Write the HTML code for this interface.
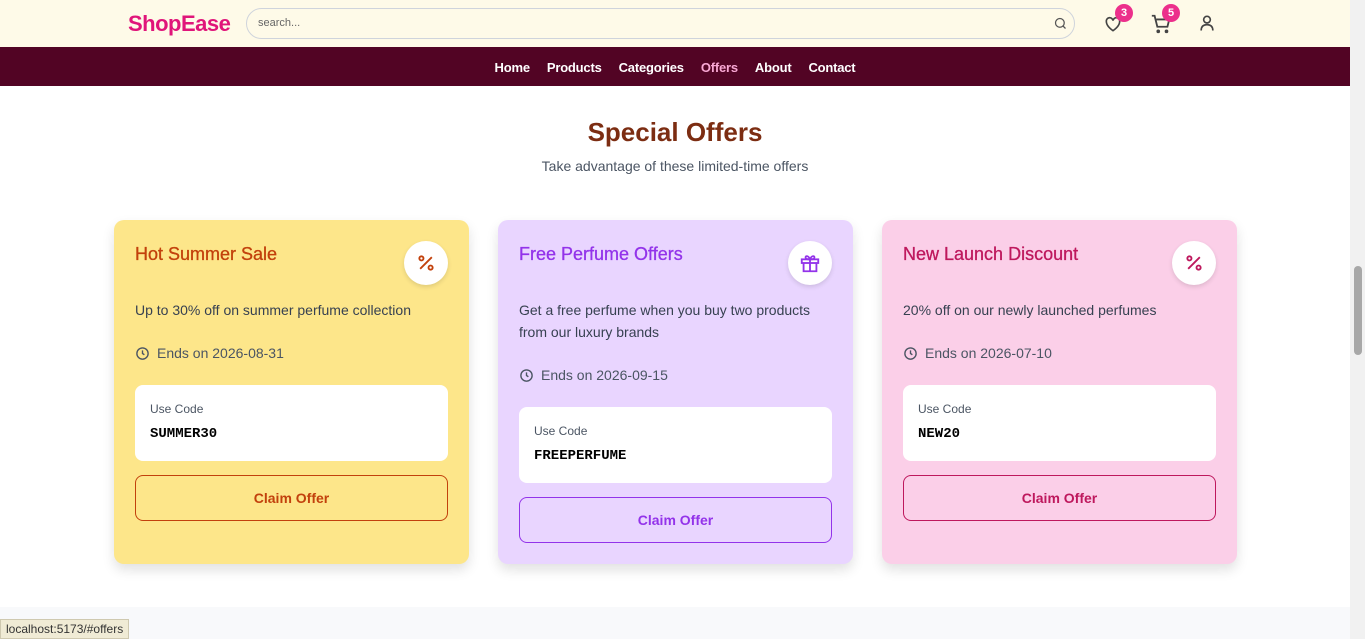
<!DOCTYPE html>
<html><head><meta charset="utf-8"><style>
*{box-sizing:border-box;margin:0;padding:0}
body{width:1365px;height:639px;overflow:hidden;font-family:"Liberation Sans",sans-serif;background:#fff;position:relative}
.top{position:absolute;left:0;top:0;width:1350px;height:47px;background:#fefae8}
.logo{position:absolute;left:128px;top:11px;font-size:22px;font-weight:bold;color:#e0157a;letter-spacing:-0.5px}
.search{position:absolute;left:246px;top:8px;width:829px;height:31px;border:1px solid #cfd4dc;border-radius:16px;font-size:11px;color:#666;padding:8px 11px}
.nav{position:absolute;left:0;top:47px;width:1350px;height:39px;background:#520424;text-align:center;font-size:13px;font-weight:bold;color:#fff;padding-top:13px;letter-spacing:-0.2px}
.nav span{margin:0 8.5px}
.badge{position:absolute;width:18px;height:18px;border-radius:50%;background:#ec2f8b;color:#fff;font-size:11px;font-weight:bold;text-align:center;line-height:18px}
h1{position:absolute;top:117px;width:1350px;text-align:center;font-size:26px;color:#7c2d12}
.sub{position:absolute;top:158px;width:1350px;text-align:center;font-size:14px;color:#4b5563}
.card{position:absolute;top:220px;width:355px;height:344px;border-radius:10px;padding:21px;box-shadow:0 6px 12px rgba(0,0,0,.12)}
.card h2{font-size:18px;font-weight:normal;margin-top:3px;-webkit-text-stroke:.3px}
.ic{position:absolute;right:21px;top:21px;width:44px;height:44px;border-radius:50%;background:#fff;box-shadow:0 2px 5px rgba(0,0,0,.12);display:flex;align-items:center;justify-content:center}
.desc{margin-top:34px;font-size:14px;line-height:22px;color:#374151;width:310px}
.ends{margin-top:24px;font-size:14px;color:#4b5563;display:flex;align-items:center;gap:7px}
.code{margin-top:24px;background:#fff;border-radius:8px;height:76px;padding:17px 15px}
.code .l{font-size:12px;color:#4b5563}
.code .c{font-family:"Liberation Mono",monospace;font-weight:bold;font-size:14px;margin-top:10px;color:#000}
.btn{margin-top:14px;height:46px;border-radius:8px;border:1px solid;text-align:center;line-height:44px;font-size:14px;font-weight:bold}
.scroll{position:absolute;left:1350px;top:0;width:15px;height:639px;background:#f1f1f1}
</style></head><body>
<div class="top"><div class="logo">ShopEase</div><div class="search">search...
<svg style="position:absolute;right:6px;top:7px" width="15" height="15" viewBox="0 0 24 24" fill="none" stroke="#555" stroke-width="2"><circle cx="11" cy="11" r="7"/><path d="M20 20l-4-4"/></svg></div>
<svg style="position:absolute;left:1103px;top:14px" width="20" height="20" viewBox="0 0 24 24" fill="none" stroke="#444" stroke-width="2"><path d="M12 20s-8-5-8-11a4 4 0 0 1 8-1 4 4 0 0 1 8 1c0 6-8 11-8 11z"/></svg>
<div class="badge" style="left:1115px;top:4px">3</div>
<svg style="position:absolute;left:1150px;top:13px" width="22" height="22" viewBox="0 0 24 24" fill="none" stroke="#444" stroke-width="2"><path d="M2 3h3l3 12h11l2-8H7"/><circle cx="9" cy="20" r="1"/><circle cx="18" cy="20" r="1"/></svg>
<div class="badge" style="left:1162px;top:4px">5</div>
<svg style="position:absolute;left:1197px;top:13px" width="20" height="20" viewBox="0 0 24 24" fill="none" stroke="#444" stroke-width="2"><circle cx="12" cy="8" r="4"/><path d="M5 21c0-5 3-7 7-7s7 2 7 7"/></svg>
</div>
<div class="nav"><span>Home</span><span>Products</span><span>Categories</span><span style="color:#f9a8d4">Offers</span><span>About</span><span>Contact</span></div>
<h1>Special Offers</h1>
<div class="sub">Take advantage of these limited-time offers</div>

<div class="card" style="left:114px;background:#fde68a"><h2 style="color:#c2410c">Hot Summer Sale</h2>
<div class="ic"><svg width="20" height="20" viewBox="0 0 24 24" fill="none" stroke="#c2410c" stroke-width="2.2"><path d="M19 5L5 19"/><circle cx="6.5" cy="6.5" r="2.5"/><circle cx="17.5" cy="17.5" r="2.5"/></svg></div>
<div class="desc">Up to 30% off on summer perfume collection</div>
<div class="ends"><svg width="15" height="15" viewBox="0 0 24 24" fill="none" stroke="#4b5563" stroke-width="2.2"><circle cx="12" cy="12" r="9"/><path d="M12 7v5l3 2"/></svg>Ends on 2026-08-31</div>
<div class="code"><div class="l">Use Code</div><div class="c">SUMMER30</div></div>
<div class="btn" style="border-color:#c2410c;color:#c2410c">Claim Offer</div></div>

<div class="card" style="left:498px;background:#e9d5ff"><h2 style="color:#9333ea">Free Perfume Offers</h2>
<div class="ic"><svg width="22" height="22" viewBox="0 0 24 24" fill="none" stroke="#9333ea" stroke-width="2"><rect x="3" y="8" width="18" height="4"/><path d="M5 12v9h14v-9M12 8v13M12 8C10 3 6 4 7.5 7 8 8 12 8 12 8c0 0 4 0 4.5-1C18 4 14 3 12 8"/></svg></div>
<div class="desc">Get a free perfume when you buy two products from our luxury brands</div>
<div class="ends"><svg width="15" height="15" viewBox="0 0 24 24" fill="none" stroke="#4b5563" stroke-width="2.2"><circle cx="12" cy="12" r="9"/><path d="M12 7v5l3 2"/></svg>Ends on 2026-09-15</div>
<div class="code"><div class="l">Use Code</div><div class="c">FREEPERFUME</div></div>
<div class="btn" style="border-color:#9333ea;color:#9333ea">Claim Offer</div></div>

<div class="card" style="left:882px;background:#fbcfe8"><h2 style="color:#be185d">New Launch Discount</h2>
<div class="ic"><svg width="20" height="20" viewBox="0 0 24 24" fill="none" stroke="#be185d" stroke-width="2.2"><path d="M19 5L5 19"/><circle cx="6.5" cy="6.5" r="2.5"/><circle cx="17.5" cy="17.5" r="2.5"/></svg></div>
<div class="desc">20% off on our newly launched perfumes</div>
<div class="ends"><svg width="15" height="15" viewBox="0 0 24 24" fill="none" stroke="#4b5563" stroke-width="2.2"><circle cx="12" cy="12" r="9"/><path d="M12 7v5l3 2"/></svg>Ends on 2026-07-10</div>
<div class="code"><div class="l">Use Code</div><div class="c">NEW20</div></div>
<div class="btn" style="border-color:#be185d;color:#be185d">Claim Offer</div></div>

<div style="position:absolute;left:0;top:607px;width:1350px;height:32px;background:#f8f9fb"></div>
<div style="position:absolute;left:0;top:619px;height:20px;background:#f0ebd5;border:1px solid #cfc9b0;font-size:12px;color:#333;padding:2px 5px">localhost:5173/#offers</div>
<div class="scroll"><div style="position:absolute;left:4px;top:266px;width:8px;height:89px;background:#a8a8a8;border-radius:4px"></div></div>
</body></html>
